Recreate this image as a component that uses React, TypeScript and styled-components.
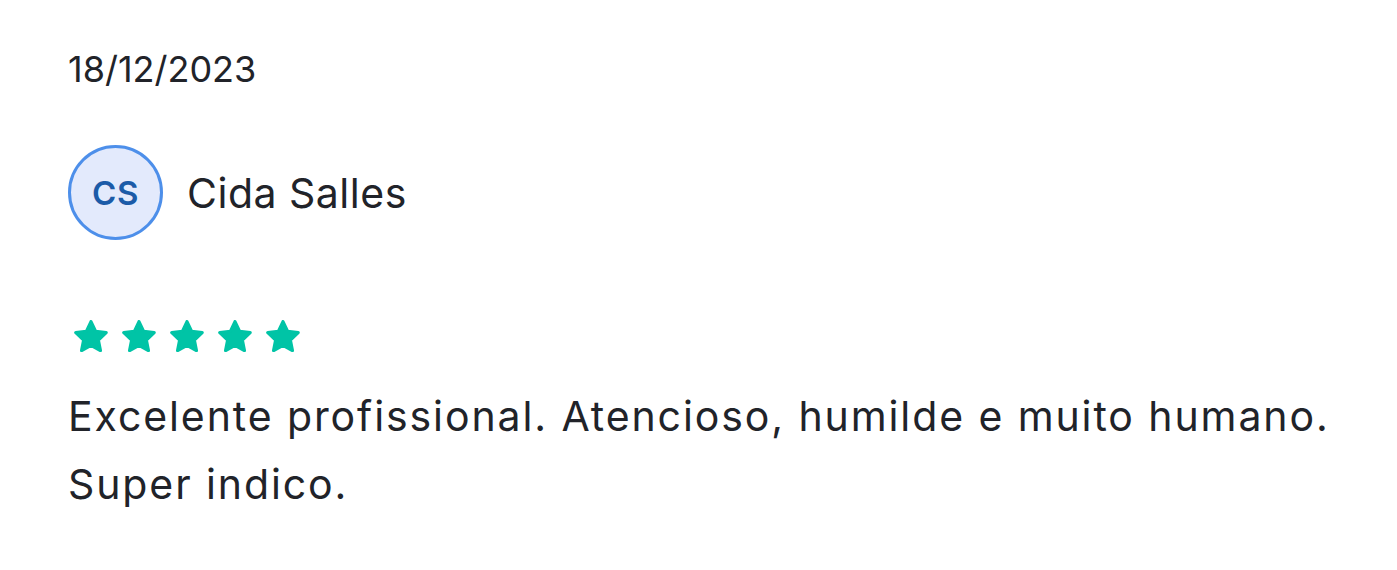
import styled, { createGlobalStyle } from 'styled-components';

const GlobalStyle = createGlobalStyle`
  html, body {
    margin: 0;
    padding: 0;
    background: #ffffff;
  }
  body {
    font-family: Inter, 'Noto Sans', 'Liberation Sans', sans-serif;
    color: #212329;
  }
`;

const Review = styled.div`
  padding: 47px 20px 0 68px;
`;

const DateText = styled.div`
  font-size: 36px;
  line-height: 44px;
  color: #212329;
`;

const AuthorRow = styled.div`
  display: flex;
  align-items: center;
  gap: 24px;
  margin-top: 54px;
`;

const Avatar = styled.div`
  width: 95px;
  height: 95px;
  box-sizing: border-box;
  border-radius: 50%;
  border: 3px solid #4d8fea;
  background: #e3eafc;
  display: flex;
  align-items: center;
  justify-content: center;
  font-size: 33px;
  font-weight: 600;
  letter-spacing: 0.5px;
  color: #1b5ba8;
`;

const AuthorName = styled.div`
  font-size: 41px;
  line-height: 50px;
  letter-spacing: 0.5px;
  color: #212329;
`;

const StarRow = styled.div`
  display: flex;
  gap: 14px;
  margin-top: 80px;
  margin-left: 6px;
  height: 32px;
`;

const Comment = styled.p`
  margin: 30px 0 0 0;
  font-size: 41px;
  line-height: 68px;
  letter-spacing: 1.9px;
  white-space: nowrap;
  color: #212329;
`;

function Star() {
  return (
    <svg width={34} height={32} viewBox="1.5 1.8 21 20" fill="#00c4a6">
      <path
        d="M12 2.8l2.9 6.1 6.6.8-4.9 4.6 1.3 6.6L12 17.6l-5.9 3.3 1.3-6.6-4.9-4.6 6.6-.8z"
        stroke="#00c4a6"
        strokeWidth={2}
        strokeLinejoin="round"
      />
    </svg>
  );
}

export default function App() {
  return (
    <>
      <GlobalStyle />
      <Review>
        <DateText>18/12/2023</DateText>
        <AuthorRow>
          <Avatar>CS</Avatar>
          <AuthorName>Cida Salles</AuthorName>
        </AuthorRow>
        <StarRow>
          {[0, 1, 2, 3, 4].map((i) => (
            <Star key={i} />
          ))}
        </StarRow>
        <Comment>
          Excelente profissional. Atencioso, humilde e muito humano.
          <br />
          Super indico.
        </Comment>
      </Review>
    </>
  );
}
